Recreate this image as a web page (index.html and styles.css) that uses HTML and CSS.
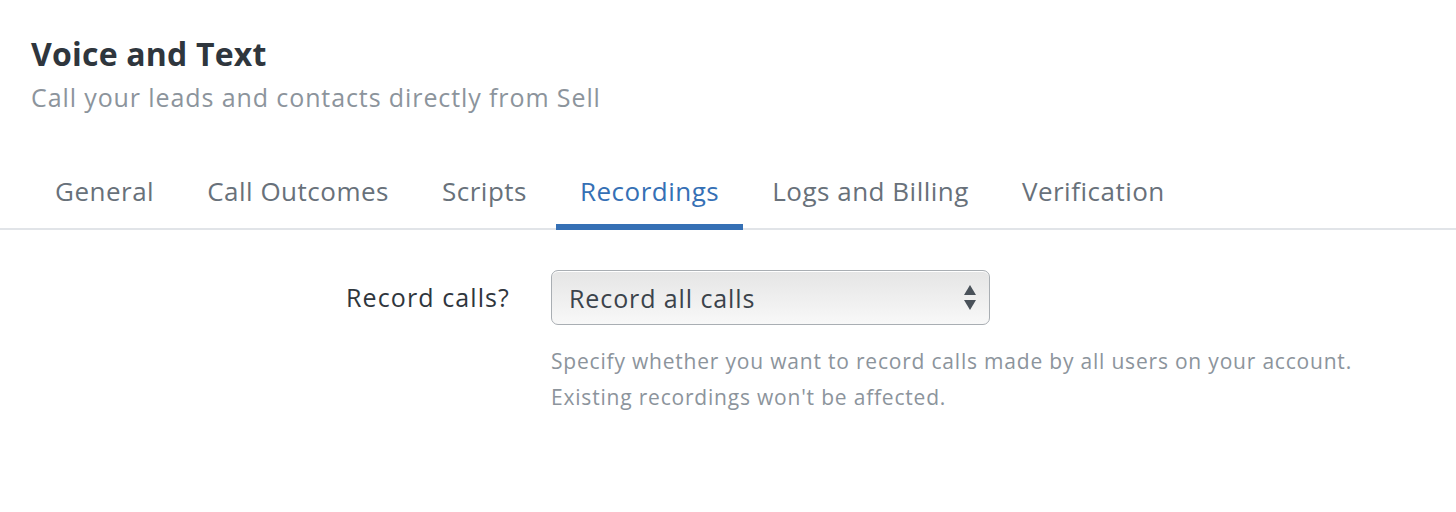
FILE: index.html
```html
<!DOCTYPE html>
<html>
<head>
<meta charset="utf-8">
<link rel="stylesheet" href="styles.css">
</head>
<body>
<div class="page">
  <header class="head">
    <h1 class="title">Voice and Text</h1>
    <p class="subtitle">Call your leads and contacts directly from Sell</p>
  </header>
  <nav class="tabs">
    <a class="tab">General</a>
    <a class="tab">Call Outcomes</a>
    <a class="tab">Scripts</a>
    <a class="tab active">Recordings</a>
    <a class="tab">Logs and Billing</a>
    <a class="tab">Verification</a>
  </nav>
  <section class="form">
    <div class="row">
      <label class="label">Record calls?</label>
      <div class="field">
        <div class="select">
          <span class="select-text">Record all calls</span>
          <svg class="arrows" width="12" height="26" viewBox="0 0 12 26"><path d="M6 0 L12 10 L0 10 Z" fill="#4a525a"/><path d="M0 15 L12 15 L6 25 Z" fill="#4a525a"/></svg>
        </div>
        <p class="help">Specify whether you want to record calls made by all users on your account.<br>Existing recordings won't be affected.</p>
      </div>
    </div>
  </section>
</div>
</body>
</html>
```
FILE: styles.css
```css
html, body { margin: 0; padding: 0; background: #fff; }
body { font-family: "Open Sans", Lato, sans-serif; }
.page { width: 1456px; }
.head { padding: 34px 31px 0; }
.title { margin: 0; font-size: 32px; line-height: 40px; font-weight: 700; color: #2f363d; letter-spacing: 0.2px; }
.subtitle { margin: 6px 0 0; font-size: 25px; line-height: 34px; color: #8c949c; letter-spacing: 0.9px; }
.tabs { display: flex; gap: 5px; margin-top: 48px; padding-left: 31px; border-bottom: 2px solid #e1e4e8; }
.tab { display: block; padding: 0 24px; height: 68px; line-height: 58px; font-size: 26px; letter-spacing: 0.5px; color: #68717a; border-bottom: 6px solid transparent; margin-bottom: -2px; box-sizing: border-box; white-space: nowrap; }
.tab.active { color: #3570b5; border-bottom-color: #3570b5; }
.form { padding-top: 40px; }
.row { display: flex; }
.label { width: 551px; text-align: right; padding-right: 41px; box-sizing: border-box; font-size: 25px; letter-spacing: 1.1px; line-height: 55px; color: #2f363d; }
.field { display: flex; flex-direction: column; }
.select { width: 439px; height: 55px; box-sizing: border-box; border: 1px solid #a9aeb3; border-radius: 7px; background: linear-gradient(#e5e5e5, #f8f8f8); box-shadow: inset 0 1px 0 #fff; display: flex; align-items: center; justify-content: space-between; padding: 0 13px 0 17px; }
.select-text { font-size: 25px; letter-spacing: 0.9px; color: #3b434b; }
.arrows { display: block; }
.help { margin: 18px 0 0; font-size: 21px; line-height: 36px; letter-spacing: 0.8px; color: #8c949c; white-space: nowrap; }
```
